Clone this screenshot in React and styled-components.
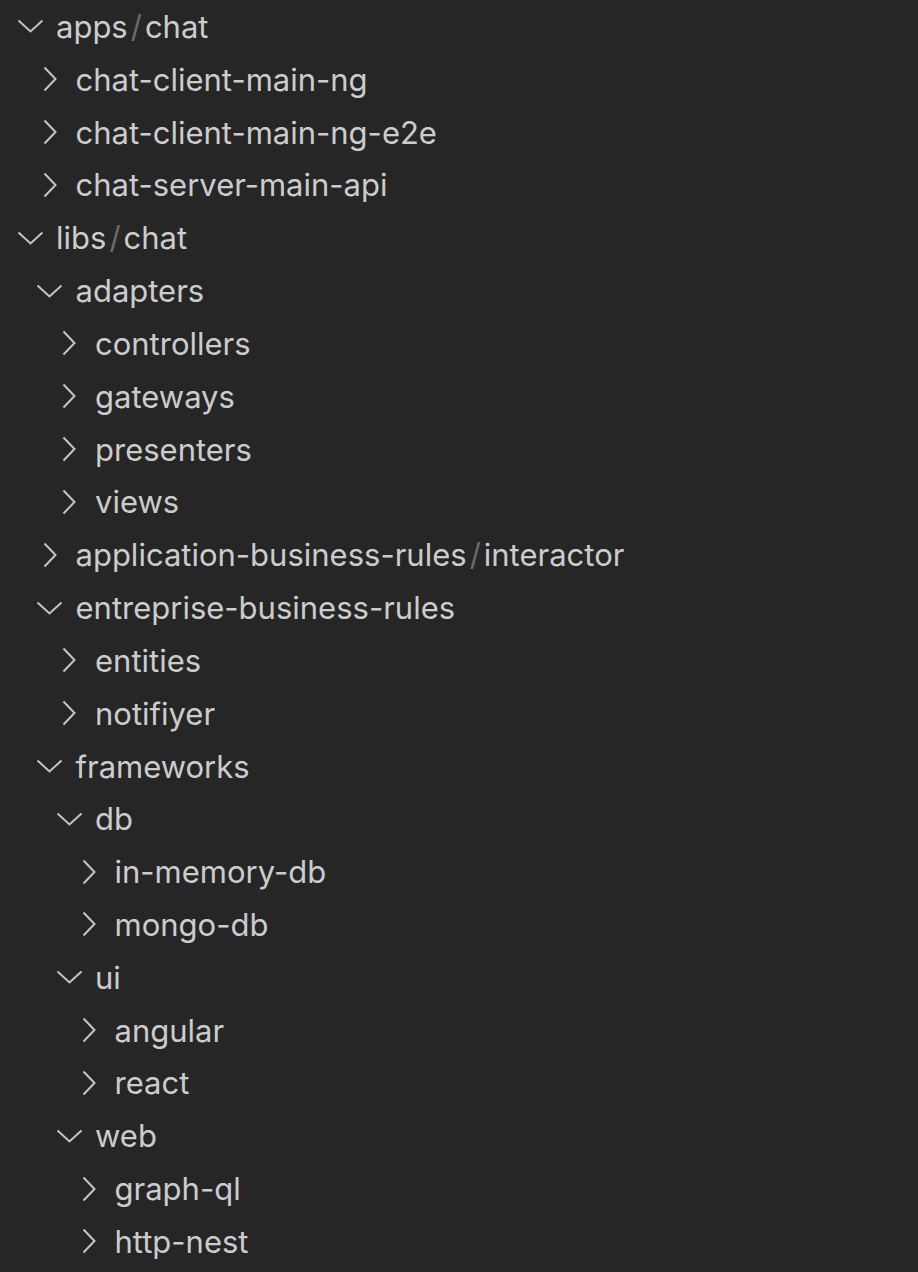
import React from "react";
import styled, { createGlobalStyle } from "styled-components";

const GlobalStyle = createGlobalStyle`
  html, body {
    margin: 0;
    padding: 0;
    background: #262626;
  }
`;

const Tree = styled.div`
  width: 918px;
  height: 1272px;
  background: #262626;
  font-family: Inter, "Noto Sans", sans-serif;
  font-size: 31px;
  color: #cccccc;
  overflow: hidden;
`;

const Row = styled.div`
  display: flex;
  align-items: center;
  height: 52.83px;
  padding-left: ${(p) => p.level * 19.5}px;
  white-space: nowrap;
`;

const Twistie = styled.span`
  display: flex;
  align-items: center;
  justify-content: center;
  width: 44px;
  margin-left: 8px;
  margin-right: 4px;
  flex: none;
`;

const Label = styled.span`
  letter-spacing: 0;
`;

const Sep = styled.span`
  color: #6b6b6b;
  margin: 0 3px;
`;

function Chevron({ open }) {
  return open ? (
    <svg width="27" height="14" viewBox="0 0 27 14">
      <path d="M1.5 1.5 L13.5 12.5 L25.5 1.5" fill="none" stroke="#c5c5c5" strokeWidth="2" />
    </svg>
  ) : (
    <svg width="14" height="26" viewBox="0 0 14 26">
      <path d="M1.5 1.5 L12.5 13 L1.5 24.5" fill="none" stroke="#c5c5c5" strokeWidth="2" />
    </svg>
  );
}

const items = [
  { level: 0, open: true, name: ["apps", "chat"] },
  { level: 1, name: ["chat-client-main-ng"] },
  { level: 1, name: ["chat-client-main-ng-e2e"] },
  { level: 1, name: ["chat-server-main-api"] },
  { level: 0, open: true, name: ["libs", "chat"] },
  { level: 1, open: true, name: ["adapters"] },
  { level: 2, name: ["controllers"] },
  { level: 2, name: ["gateways"] },
  { level: 2, name: ["presenters"] },
  { level: 2, name: ["views"] },
  { level: 1, name: ["application-business-rules", "interactor"] },
  { level: 1, open: true, name: ["entreprise-business-rules"] },
  { level: 2, name: ["entities"] },
  { level: 2, name: ["notifiyer"] },
  { level: 1, open: true, name: ["frameworks"] },
  { level: 2, open: true, name: ["db"] },
  { level: 3, name: ["in-memory-db"] },
  { level: 3, name: ["mongo-db"] },
  { level: 2, open: true, name: ["ui"] },
  { level: 3, name: ["angular"] },
  { level: 3, name: ["react"] },
  { level: 2, open: true, name: ["web"] },
  { level: 3, name: ["graph-ql"] },
  { level: 3, name: ["http-nest"] },
];

export default function App() {
  return (
    <>
      <GlobalStyle />
      <Tree>
        {items.map((item, i) => (
          <Row key={i} level={item.level}>
            <Twistie>
              <Chevron open={item.open} />
            </Twistie>
            <Label>
              {item.name.map((part, j) => (
                <React.Fragment key={j}>
                  {j > 0 && <Sep>/</Sep>}
                  {part}
                </React.Fragment>
              ))}
            </Label>
          </Row>
        ))}
      </Tree>
    </>
  );
}
